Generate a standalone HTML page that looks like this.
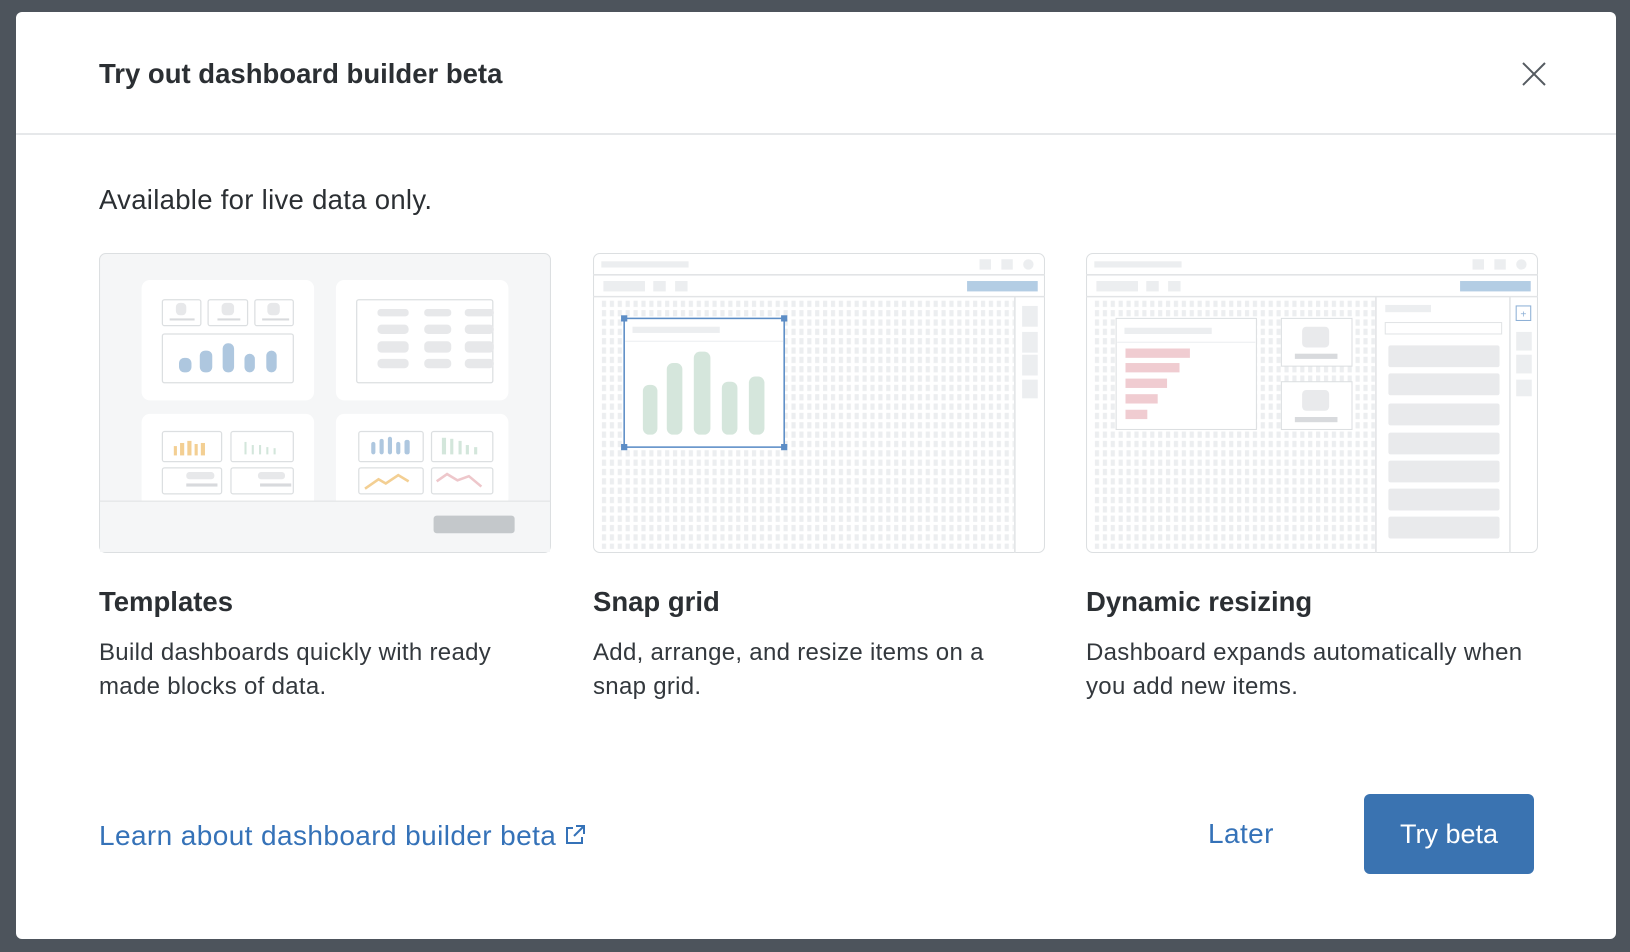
<!DOCTYPE html>
<html><head><meta charset="utf-8"><style>
*{margin:0;padding:0;box-sizing:border-box}
body{width:1630px;height:952px;background:#4d545c;font-family:"Liberation Sans",Arial,sans-serif;position:relative;overflow:hidden}
.modal{position:absolute;left:16px;top:12px;width:1600px;height:927px;background:#fff;border-radius:6px}
.hdr{position:absolute;left:0;top:0;width:100%;height:123px;border-bottom:2px solid #e6e8ea}
.title{position:absolute;left:83px;top:46px;font-size:27.5px;font-weight:bold;color:#2b2f33;white-space:nowrap}
.x{position:absolute;left:1506px;top:50px}
.avail{position:absolute;left:83px;top:172px;font-size:27.5px;letter-spacing:0.3px;color:#2b2f33}
.card{position:absolute;top:241px;width:452px;height:300px}
.h{position:absolute;top:574px;font-size:27.5px;font-weight:bold;color:#2b2f33}
.d{position:absolute;top:624px;font-size:24px;letter-spacing:0.3px;line-height:34px;color:#33383d;width:440px}
.link{position:absolute;left:83px;top:808px;font-size:28px;letter-spacing:0.4px;color:#3572b8;white-space:nowrap}
.later{position:absolute;left:1192px;top:806px;font-size:28px;letter-spacing:0.4px;color:#3572b8}
.btn{position:absolute;left:1348px;top:782px;width:170px;height:80px;background:#3a73b1;border-radius:6px;color:#fff;font-size:27px;text-align:center;line-height:80px}
</style></head><body>
<div class="modal">
<div class="hdr"></div>
<div class="title">Try out dashboard builder beta</div>
<svg class="x" width="24" height="24" viewBox="0 0 24 24"><path d="M1 1L23 23M23 1L1 23" stroke="#555b61" stroke-width="2"/></svg>
<div class="avail">Available for live data only.</div>

<svg class="card" style="left:83px" viewBox="0 0 435 289" preserveAspectRatio="none">
<rect x="0.5" y="0.5" width="434" height="288" rx="6" fill="#f5f6f7" stroke="#dcdfe1"/>
<g fill="#fff"><rect x="41" y="26" width="166" height="116" rx="8"/><rect x="228" y="26" width="166" height="116" rx="8"/><rect x="41" y="155" width="166" height="90" rx="8"/><rect x="228" y="155" width="166" height="90" rx="8"/></g>
<g fill="none" stroke="#dcdfe1" stroke-width="1.2">
<rect x="61" y="45" width="37" height="25" rx="2"/><rect x="105" y="45" width="38" height="25" rx="2"/><rect x="150" y="45" width="37" height="25" rx="2"/>
<rect x="61" y="78" width="126" height="47" rx="2"/><rect x="248" y="45" width="131" height="80" rx="2"/>
<rect x="61" y="172" width="57" height="29" rx="2"/><rect x="127" y="172" width="60" height="29" rx="2"/><rect x="61" y="207" width="57" height="25" rx="2"/><rect x="127" y="207" width="60" height="25" rx="2"/>
<rect x="250" y="172" width="62" height="29" rx="2"/><rect x="320" y="172" width="59" height="29" rx="2"/><rect x="250" y="207" width="62" height="25" rx="2"/><rect x="320" y="207" width="59" height="25" rx="2"/>
</g>
<g fill="#aec7df"><rect x="77" y="101" width="12" height="14" rx="5"/><rect x="97" y="94" width="12" height="21" rx="5"/><rect x="119" y="87" width="11" height="28" rx="5"/><rect x="140" y="97" width="10" height="18" rx="5"/><rect x="161" y="94" width="10" height="21" rx="5"/>
<rect x="262" y="182" width="4" height="12" rx="2"/><rect x="270" y="179" width="4" height="15" rx="2"/><rect x="278" y="177" width="4" height="17" rx="2"/><rect x="286" y="182" width="4" height="12" rx="2"/><rect x="294" y="180" width="5" height="14" rx="2"/></g>
<g fill="#e7e8ea"><rect x="268" y="54" width="30" height="7" rx="3"/><rect x="313" y="54" width="26" height="7" rx="3"/><rect x="352" y="54" width="28" height="7" rx="3"/><rect x="268" y="69" width="30" height="9" rx="4"/><rect x="313" y="69" width="26" height="9" rx="4"/><rect x="352" y="69" width="28" height="9" rx="4"/><rect x="268" y="85" width="30" height="11" rx="4"/><rect x="313" y="85" width="26" height="11" rx="4"/><rect x="352" y="85" width="28" height="11" rx="4"/><rect x="268" y="102" width="30" height="9" rx="4"/><rect x="313" y="102" width="26" height="9" rx="4"/><rect x="352" y="102" width="28" height="9" rx="4"/>
<rect x="74" y="48" width="10" height="12" rx="4"/><rect x="118" y="48" width="12" height="12" rx="4"/><rect x="162" y="48" width="12" height="12" rx="4"/><rect x="84" y="211" width="27" height="7" rx="3"/><rect x="153" y="211" width="26" height="7" rx="3"/></g>
<g fill="#d8dadd"><rect x="68" y="63" width="24" height="2"/><rect x="114" y="63" width="22" height="2"/><rect x="157" y="63" width="26" height="2"/><rect x="84" y="222" width="30" height="3"/><rect x="155" y="222" width="30" height="3"/></g>
<g fill="#f3cf93"><rect x="72" y="186" width="3" height="9"/><rect x="78" y="183" width="4" height="12"/><rect x="85" y="181" width="4" height="14"/><rect x="92" y="184" width="3" height="11"/><rect x="98" y="183" width="4" height="12"/></g>
<g fill="#d3e6db"><rect x="140" y="182" width="2" height="12"/><rect x="147" y="185" width="2" height="9"/><rect x="154" y="185" width="2" height="9"/><rect x="161" y="187" width="2" height="7"/><rect x="168" y="188" width="2" height="6"/><rect x="330" y="178" width="4" height="16"/><rect x="338" y="179" width="3" height="15"/><rect x="346" y="181" width="3" height="13"/><rect x="353" y="185" width="3" height="9"/><rect x="361" y="187" width="3" height="7"/></g>
<polyline points="256,227 269,218 276,222 288,214 298,220" fill="none" stroke="#f3cf93" stroke-width="2.5"/>
<polyline points="325,220 335,213 345,219 356,215 368,225" fill="none" stroke="#eec7cb" stroke-width="2.5"/>
<rect x="1" y="239" width="433" height="49" fill="#f5f6f7"/><line x1="0" y1="239" x2="435" y2="239" stroke="#dfe1e3"/>
<rect x="322" y="253" width="78" height="17" rx="3" fill="#c4c8cb"/>
</svg>

<svg class="card" style="left:577px" viewBox="0 0 435 289" preserveAspectRatio="none">
<defs><pattern id="g" width="7.6" height="9" patternUnits="userSpaceOnUse"><rect x="1" y="1" width="4" height="6" fill="#eceef0"/></pattern></defs>
<rect x="0.5" y="0.5" width="434" height="288" rx="6" fill="#fff" stroke="#dcdfe1"/>
<line x1="0" y1="21" x2="435" y2="21" stroke="#e2e4e6" stroke-width="1.5"/><line x1="0" y1="42" x2="435" y2="42" stroke="#e2e4e6" stroke-width="1.5"/>
<g fill="#eceef0"><rect x="8" y="8" width="84" height="6"/><rect x="372" y="6" width="11" height="10"/><rect x="393" y="6" width="11" height="10"/><rect x="414" y="6" width="10" height="10" rx="5"/><rect x="10" y="27" width="40" height="10"/><rect x="58" y="27" width="12" height="10"/><rect x="79" y="27" width="12" height="10"/><rect x="413" y="51" width="15" height="20"/><rect x="413" y="76" width="15" height="20"/><rect x="413" y="98" width="15" height="20"/><rect x="413" y="122" width="15" height="18"/></g>
<rect x="360" y="27" width="68" height="10" fill="#b3cde4"/>
<rect x="8" y="45" width="397" height="240" fill="url(#g)"/>
<line x1="406" y1="42" x2="406" y2="289" stroke="#e2e4e6" stroke-width="1.5"/>
<rect x="30" y="63" width="154" height="124" fill="#fff" stroke="#5c8dc6" stroke-width="1.5"/>
<rect x="38" y="71" width="84" height="6" fill="#eceef0"/><line x1="31" y1="85" x2="183" y2="85" stroke="#eceef0"/>
<g fill="#d5e6dc"><rect x="48" y="127" width="14" height="48" rx="6"/><rect x="71" y="106" width="15" height="69" rx="6"/><rect x="97" y="95" width="16" height="80" rx="6"/><rect x="124" y="124" width="15" height="51" rx="6"/><rect x="150" y="119" width="15" height="56" rx="6"/></g>
<g fill="#5c8dc6"><rect x="27" y="60" width="6" height="6"/><rect x="181" y="60" width="6" height="6"/><rect x="27" y="184" width="6" height="6"/><rect x="181" y="184" width="6" height="6"/></g>
</svg>

<svg class="card" style="left:1070px" viewBox="0 0 435 289" preserveAspectRatio="none">
<defs><pattern id="g2" width="7.6" height="9" patternUnits="userSpaceOnUse"><rect x="1" y="1" width="4" height="6" fill="#eceef0"/></pattern></defs>
<rect x="0.5" y="0.5" width="434" height="288" rx="6" fill="#fff" stroke="#dcdfe1"/>
<line x1="0" y1="21" x2="435" y2="21" stroke="#e2e4e6" stroke-width="1.5"/><line x1="0" y1="42" x2="435" y2="42" stroke="#e2e4e6" stroke-width="1.5"/>
<g fill="#eceef0"><rect x="8" y="8" width="84" height="6"/><rect x="372" y="6" width="11" height="10"/><rect x="393" y="6" width="11" height="10"/><rect x="414" y="6" width="10" height="10" rx="5"/><rect x="10" y="27" width="40" height="10"/><rect x="58" y="27" width="12" height="10"/><rect x="79" y="27" width="12" height="10"/><rect x="414" y="76" width="15" height="18"/><rect x="414" y="98" width="15" height="18"/><rect x="414" y="122" width="15" height="16"/><rect x="288" y="50" width="44" height="7"/></g>
<rect x="360" y="27" width="68" height="10" fill="#b3cde4"/>
<rect x="8" y="45" width="270" height="240" fill="url(#g2)"/>
<line x1="279" y1="42" x2="279" y2="289" stroke="#e2e4e6" stroke-width="1.5"/><line x1="408" y1="42" x2="408" y2="289" stroke="#e2e4e6" stroke-width="1.5"/>
<rect x="414" y="51" width="14" height="14" fill="#fff" stroke="#8db0d6"/><text x="418" y="62" font-size="10" fill="#8db0d6">+</text>
<rect x="288" y="67" width="112" height="11" fill="#fff" stroke="#e2e4e6"/>
<g fill="#e9eaec"><rect x="291" y="89" width="107" height="21" rx="2"/><rect x="291" y="116" width="107" height="21" rx="2"/><rect x="291" y="145" width="107" height="21" rx="2"/><rect x="291" y="173" width="107" height="21" rx="2"/><rect x="291" y="200" width="107" height="21" rx="2"/><rect x="291" y="227" width="107" height="21" rx="2"/><rect x="291" y="254" width="107" height="21" rx="2"/></g>
<rect x="29" y="63" width="135" height="107" fill="#fff" stroke="#dcdfe1"/><rect x="37" y="72" width="84" height="6" fill="#eceef0"/><line x1="30" y1="86" x2="163" y2="86" stroke="#eceef0"/>
<g fill="#f0ccd1"><rect x="38" y="92" width="62" height="9"/><rect x="38" y="106" width="52" height="9"/><rect x="38" y="121" width="40" height="9"/><rect x="38" y="136" width="31" height="9"/><rect x="38" y="151" width="21" height="9"/></g>
<rect x="188" y="63" width="68" height="46" fill="#fff" stroke="#dcdfe1"/><rect x="208" y="71" width="26" height="20" rx="4" fill="#e9eaec"/><rect x="201" y="97" width="41" height="5" fill="#d8dadd"/>
<rect x="188" y="124" width="68" height="46" fill="#fff" stroke="#dcdfe1"/><rect x="208" y="132" width="26" height="20" rx="4" fill="#e9eaec"/><rect x="201" y="158" width="41" height="5" fill="#d8dadd"/>
</svg>

<div class="h" style="left:83px">Templates</div>
<div class="d" style="left:83px">Build dashboards quickly with ready made blocks of data.</div>
<div class="h" style="left:577px">Snap grid</div>
<div class="d" style="left:577px;width:420px">Add, arrange, and resize items on a snap grid.</div>
<div class="h" style="left:1070px">Dynamic resizing</div>
<div class="d" style="left:1070px;width:460px">Dashboard expands automatically when you add new items.</div>

<div class="link">Learn about dashboard builder beta <svg width="22" height="22" viewBox="0 0 22 22" style="vertical-align:-1px"><path d="M9 4H3v15h15v-6M12 2h8v8M20 2L10 12" fill="none" stroke="#3572b8" stroke-width="2"/></svg></div>
<div class="later">Later</div>
<div class="btn">Try beta</div>
</div>
</body></html>
